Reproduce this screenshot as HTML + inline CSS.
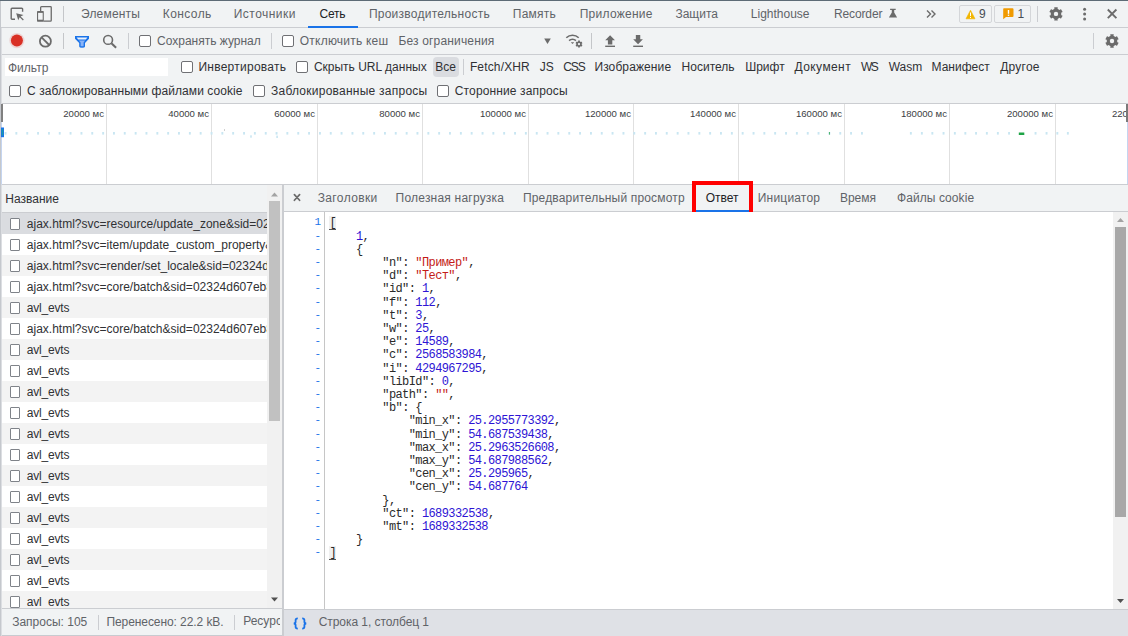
<!DOCTYPE html>
<html><head><meta charset="utf-8">
<style>
*{box-sizing:border-box;margin:0;padding:0}
html,body{width:1128px;height:636px;overflow:hidden;background:#fff;font-family:"Liberation Sans",sans-serif;font-size:12px;color:#202124}
.t{position:absolute;white-space:nowrap}
.r{position:absolute}
.cb{position:absolute;width:12px;height:12px;border:1.5px solid #6f7074;border-radius:2px;background:#fff}
.lcb{position:absolute;width:10px;height:12px;border:1px solid #7f8389;border-radius:1px;background:#fff}
svg{position:absolute;overflow:visible}
</style></head><body>
<div class="r" style="left:0px;top:0px;width:1128px;height:27px;background:#f1f3f4;"></div>
<div class="r" style="left:0px;top:27px;width:1128px;height:1px;background:#cbcdd1;"></div>
<div class="r" style="left:0px;top:28px;width:1128px;height:26px;background:#f1f3f4;"></div>
<div class="r" style="left:0px;top:54px;width:1128px;height:1px;background:#cbcdd1;"></div>
<svg style="left:0;top:0" width="1128" height="28">
<path d="M15 19.3 H12 a0.8 0.8 0 0 1 -0.8 -0.8 V9.1 a0.8 0.8 0 0 1 0.8 -0.8 H21.8 a0.8 0.8 0 0 1 0.8 0.8 V11.8" fill="none" stroke="#6b6b6b" stroke-width="1.4"/>
<path d="M16.2 13.2 L23.5 14.9 L20.6 16.4 L23.8 19.6 L22.9 20.5 L19.7 17.3 L18.2 20.2 Z" fill="#6b6b6b"/>
<path d="M40.65 11 V7.5 a0.85 0.85 0 0 1 0.85 -0.85 H50.4 a0.85 0.85 0 0 1 0.85 0.85 V20.3 a0.85 0.85 0 0 1 -0.85 0.85 H43.5" fill="none" stroke="#6b6b6b" stroke-width="1.3"/>
<rect x="37" y="11" width="6.8" height="10.8" rx="0.7" fill="#6b6b6b"/>
<rect x="38.1" y="12.9" width="4.6" height="6.8" fill="#f1f3f4"/>
</svg>
<div class="r" style="left:63px;top:6px;width:1px;height:16px;background:#c4c6c9;"></div>
<div class="t" style="left:81.0px;top:7.84px;font-size:12px;line-height:12px;color:#5f6368;font-family:'Liberation Sans',sans-serif;letter-spacing:0.186px;">Элементы</div>
<div class="t" style="left:162.8px;top:7.84px;font-size:12px;line-height:12px;color:#5f6368;font-family:'Liberation Sans',sans-serif;letter-spacing:0.400px;">Консоль</div>
<div class="t" style="left:233.8px;top:7.84px;font-size:12px;line-height:12px;color:#5f6368;font-family:'Liberation Sans',sans-serif;letter-spacing:0.450px;">Источники</div>
<div class="t" style="left:319.5px;top:7.84px;font-size:12px;line-height:12px;color:#202124;font-family:'Liberation Sans',sans-serif;letter-spacing:-0.267px;">Сеть</div>
<div class="t" style="left:368.9px;top:7.84px;font-size:12px;line-height:12px;color:#5f6368;font-family:'Liberation Sans',sans-serif;letter-spacing:0.253px;">Производительность</div>
<div class="t" style="left:512.8px;top:7.84px;font-size:12px;line-height:12px;color:#5f6368;font-family:'Liberation Sans',sans-serif;letter-spacing:0.220px;">Память</div>
<div class="t" style="left:579.7px;top:7.84px;font-size:12px;line-height:12px;color:#5f6368;font-family:'Liberation Sans',sans-serif;letter-spacing:0.267px;">Приложение</div>
<div class="t" style="left:675.4px;top:7.84px;font-size:12px;line-height:12px;color:#5f6368;font-family:'Liberation Sans',sans-serif;">Защита</div>
<div class="t" style="left:750.8px;top:7.84px;font-size:12px;line-height:12px;color:#5f6368;font-family:'Liberation Sans',sans-serif;">Lighthouse</div>
<div class="t" style="left:834.0px;top:7.84px;font-size:12px;line-height:12px;color:#5f6368;font-family:'Liberation Sans',sans-serif;letter-spacing:-0.129px;">Recorder</div>
<div class="r" style="left:308px;top:26px;width:50px;height:2px;background:#1a73e8;"></div>
<svg style="left:0;top:0" width="1128" height="28">
<path d="M890.1 8.8 H895.7 V10 H894.2 V12.4 L897.1 17.6 H888.9 L891.8 12.4 V10 H890.1 Z" fill="#6b6b6b"/>
<path d="M927 10.5 L930.5 14 L927 17.5 M931.5 10.5 L935 14 L931.5 17.5" fill="none" stroke="#6b6b6b" stroke-width="1.4"/>
</svg>
<div class="r" style="left:959px;top:5px;width:33px;height:18px;border:1px solid #d4d6d9;border-radius:2px"></div>
<div class="r" style="left:994px;top:5px;width:37px;height:18px;border:1px solid #d4d6d9;border-radius:2px"></div>
<svg style="left:0;top:0" width="1128" height="28">
<path d="M970.5 10.2 L975 18.8 H966 Z" fill="#f2b600" stroke="#f2b600" stroke-width="0.6" stroke-linejoin="round"/>
<rect x="970" y="12.5" width="1" height="3.6" fill="#fff"/><rect x="970" y="17" width="1" height="1" fill="#fff"/>
<path d="M1003.7 8.3 H1012.5 a1 1 0 0 1 1 1 V16 a1 1 0 0 1 -1 1 H1006 L1003.2 19.3 V9.3 a1 1 0 0 1 0.5 -1 Z" fill="#f09a00"/>
<rect x="1007.8" y="10" width="1.4" height="3.8" fill="#fff"/><rect x="1007.8" y="14.6" width="1.4" height="1.3" fill="#fff"/>
</svg>
<div class="t" style="left:979px;top:8.04px;font-size:12px;line-height:12px;color:#474d52;font-family:'Liberation Sans',sans-serif;">9</div>
<div class="t" style="left:1017.5px;top:8.04px;font-size:12px;line-height:12px;color:#474d52;font-family:'Liberation Sans',sans-serif;">1</div>
<div class="r" style="left:1037px;top:6px;width:1px;height:16px;background:#cbcdd1;"></div>
<svg style="left:0;top:0" width="1128" height="56">
<path d="M1054.50 8.59 L1054.21 7.24 L1057.79 7.24 L1057.50 8.59 L1058.57 9.45 L1059.85 9.95 L1060.88 9.02 L1062.66 12.11 L1061.35 12.54 L1061.13 13.90 L1061.35 15.26 L1062.66 15.69 L1060.88 18.78 L1059.85 17.85 L1058.57 18.35 L1057.50 19.21 L1057.79 20.56 L1054.21 20.56 L1054.50 19.21 L1053.43 18.35 L1052.15 17.85 L1051.12 18.78 L1049.34 15.69 L1050.65 15.26 L1050.87 13.90 L1050.65 12.54 L1049.34 12.11 L1051.12 9.02 L1052.15 9.95 L1053.43 9.45 Z" fill="#6b6b6b"/><circle cx="1056" cy="13.9" r="2.21" fill="#f1f3f4"/>
<circle cx="1084.6" cy="9.3" r="1.5" fill="#6b6b6b"/><circle cx="1084.6" cy="14.1" r="1.5" fill="#6b6b6b"/><circle cx="1084.6" cy="19" r="1.5" fill="#6b6b6b"/>
<path d="M1107.8 9.5 L1116.4 18.1 M1116.4 9.5 L1107.8 18.1" stroke="#6b6b6b" stroke-width="1.9"/>
<path d="M1110.50 35.69 L1110.21 34.34 L1113.79 34.34 L1113.50 35.69 L1114.57 36.55 L1115.85 37.05 L1116.88 36.12 L1118.66 39.21 L1117.35 39.64 L1117.13 41.00 L1117.35 42.36 L1118.66 42.79 L1116.88 45.88 L1115.85 44.95 L1114.57 45.45 L1113.50 46.31 L1113.79 47.66 L1110.21 47.66 L1110.50 46.31 L1109.43 45.45 L1108.15 44.95 L1107.12 45.88 L1105.34 42.79 L1106.65 42.36 L1106.87 41.00 L1106.65 39.64 L1105.34 39.21 L1107.12 36.12 L1108.15 37.05 L1109.43 36.55 Z" fill="#6b6b6b"/><circle cx="1112" cy="41" r="2.21" fill="#f1f3f4"/>
</svg>
<svg style="left:0;top:0" width="1128" height="56">
<circle cx="16.9" cy="40.6" r="7.6" fill="#d93025" opacity="0.15"/>
<circle cx="16.9" cy="40.6" r="6" fill="#d93025"/>
<circle cx="45.4" cy="41.2" r="5.5" fill="none" stroke="#6b6b6b" stroke-width="1.8"/>
<path d="M41.6 37.4 L49.2 45" stroke="#6b6b6b" stroke-width="1.8"/>
<path d="M75 36 H89 V38.8 L85 43 V46.5 Q85 47.8 82.1 47.8 Q79.2 47.8 79.2 46.5 V43 L75 38.8 Z" fill="#1a73e8"/>
<path d="M76.6 37.5 H87.4 L85.8 39.6 H78.2 Z" fill="#e9f1fd"/>
<path d="M78.8 40.6 H85.2 L83.6 42.4 V46.2 H80.6 V42.4 Z" fill="#8ab4f8"/>
<circle cx="108.1" cy="39.9" r="4.4" fill="none" stroke="#6b6b6b" stroke-width="1.6"/>
<path d="M111.4 43.3 L116.1 47.7" stroke="#6b6b6b" stroke-width="2.1"/>
<path d="M544.2 38.5 H550.8 L547.5 44 Z" fill="#6b6b6b"/>
<path d="M566.3 37.8 A8.8 8.8 0 0 1 578.7 37.8" fill="none" stroke="#6b6b6b" stroke-width="1.6"/>
<path d="M569.1 40.6 A4.8 4.8 0 0 1 575.9 40.6" fill="none" stroke="#6b6b6b" stroke-width="1.6"/>
<path d="M570.8 42.3 L574.2 42.3 L572.5 44 Z" fill="#6b6b6b"/>
<path d="M578.22 41.33 L578.07 40.62 L579.93 40.62 L579.78 41.33 L580.34 41.78 L581.01 42.04 L581.55 41.55 L582.48 43.17 L581.79 43.39 L581.68 44.10 L581.79 44.81 L582.48 45.03 L581.55 46.65 L581.01 46.16 L580.34 46.42 L579.78 46.87 L579.93 47.58 L578.07 47.58 L578.22 46.87 L577.66 46.42 L576.99 46.16 L576.45 46.65 L575.52 45.03 L576.21 44.81 L576.32 44.10 L576.21 43.39 L575.52 43.17 L576.45 41.55 L576.99 42.04 L577.66 41.78 Z" fill="#6b6b6b"/><circle cx="579" cy="44.1" r="1.15" fill="#f1f3f4"/>
<path d="M610.1 35.3 L615 40.3 H612.3 V44.5 H607.9 V40.3 H605.2 Z" fill="#6b6b6b"/>
<rect x="605.2" y="45.6" width="9.8" height="1.4" fill="#6b6b6b"/>
<path d="M638.05 44.2 L642.9 39.3 H640.25 V35.1 H635.85 V39.3 H633.2 Z" fill="#6b6b6b"/>
<rect x="633.2" y="45.6" width="9.8" height="1.4" fill="#6b6b6b"/>
</svg>
<div class="r" style="left:63px;top:33px;width:1px;height:16px;background:#c4c6c9;"></div>
<div class="r" style="left:128px;top:33px;width:1px;height:16px;background:#cbcdd1;"></div>
<div class="cb" style="left:139px;top:35px"></div>
<div class="t" style="left:157.0px;top:34.84px;font-size:12px;line-height:12px;color:#5f6368;font-family:'Liberation Sans',sans-serif;">Сохранять журнал</div>
<div class="r" style="left:271px;top:33px;width:1px;height:16px;background:#cbcdd1;"></div>
<div class="cb" style="left:282px;top:35px"></div>
<div class="t" style="left:299.8px;top:34.84px;font-size:12px;line-height:12px;color:#5f6368;font-family:'Liberation Sans',sans-serif;letter-spacing:0.217px;">Отключить кеш</div>
<div class="t" style="left:398.4px;top:34.84px;font-size:12px;line-height:12px;color:#5f6368;font-family:'Liberation Sans',sans-serif;letter-spacing:0.164px;">Без ограничения</div>
<div class="r" style="left:591px;top:33px;width:1px;height:16px;background:#c4c6c9;"></div>
<div class="r" style="left:1093px;top:33px;width:1px;height:16px;background:#cbcdd1;"></div>
<div class="r" style="left:0px;top:55px;width:1128px;height:48px;background:#f1f3f4;"></div>
<div class="r" style="left:0px;top:103px;width:1128px;height:1px;background:#cbcdd1;"></div>
<div class="r" style="left:5px;top:58px;width:163px;height:18px;background:#fff;"></div>
<div class="t" style="left:8px;top:61.84px;font-size:12px;line-height:12px;color:#5f6368;font-family:'Liberation Sans',sans-serif;">Фильтр</div>
<div class="cb" style="left:181px;top:61px"></div>
<div class="t" style="left:198.4px;top:61.04px;font-size:12px;line-height:12px;color:#303134;font-family:'Liberation Sans',sans-serif;letter-spacing:0.258px;">Инвертировать</div>
<div class="cb" style="left:296px;top:61px"></div>
<div class="t" style="left:313.9px;top:61.04px;font-size:12px;line-height:12px;color:#303134;font-family:'Liberation Sans',sans-serif;">Скрыть URL данных</div>
<div class="r" style="left:433px;top:57px;width:26px;height:20px;background:#dadce0;border-radius:4px"></div>
<div class="t" style="left:435.2px;top:61.04px;font-size:12px;line-height:12px;color:#303134;font-family:'Liberation Sans',sans-serif;">Все</div>
<div class="r" style="left:463px;top:59px;width:1px;height:16px;background:#cbcdd1;"></div>
<div class="t" style="left:469.9px;top:61.04px;font-size:12px;line-height:12px;color:#303134;font-family:'Liberation Sans',sans-serif;letter-spacing:0.150px;">Fetch/XHR</div>
<div class="t" style="left:539.7px;top:61.04px;font-size:12px;line-height:12px;color:#303134;font-family:'Liberation Sans',sans-serif;">JS</div>
<div class="t" style="left:563.3px;top:61.04px;font-size:12px;line-height:12px;color:#303134;font-family:'Liberation Sans',sans-serif;letter-spacing:-1.100px;">CSS</div>
<div class="t" style="left:594.4px;top:61.04px;font-size:12px;line-height:12px;color:#303134;font-family:'Liberation Sans',sans-serif;letter-spacing:0.110px;">Изображение</div>
<div class="t" style="left:681.6px;top:61.04px;font-size:12px;line-height:12px;color:#303134;font-family:'Liberation Sans',sans-serif;">Носитель</div>
<div class="t" style="left:745.2px;top:61.04px;font-size:12px;line-height:12px;color:#303134;font-family:'Liberation Sans',sans-serif;">Шрифт</div>
<div class="t" style="left:794.6px;top:61.04px;font-size:12px;line-height:12px;color:#303134;font-family:'Liberation Sans',sans-serif;letter-spacing:0.400px;">Документ</div>
<div class="t" style="left:861.0px;top:61.04px;font-size:12px;line-height:12px;color:#303134;font-family:'Liberation Sans',sans-serif;letter-spacing:-1.500px;">WS</div>
<div class="t" style="left:888.7px;top:61.04px;font-size:12px;line-height:12px;color:#303134;font-family:'Liberation Sans',sans-serif;">Wasm</div>
<div class="t" style="left:931.5px;top:61.04px;font-size:12px;line-height:12px;color:#303134;font-family:'Liberation Sans',sans-serif;">Манифест</div>
<div class="t" style="left:1000.2px;top:61.04px;font-size:12px;line-height:12px;color:#303134;font-family:'Liberation Sans',sans-serif;letter-spacing:0.240px;">Другое</div>
<div class="cb" style="left:9px;top:85px"></div>
<div class="t" style="left:27.0px;top:84.84px;font-size:12px;line-height:12px;color:#303134;font-family:'Liberation Sans',sans-serif;letter-spacing:0.091px;">С заблокированными файлами cookie</div>
<div class="cb" style="left:253px;top:85px"></div>
<div class="t" style="left:271.0px;top:84.84px;font-size:12px;line-height:12px;color:#303134;font-family:'Liberation Sans',sans-serif;letter-spacing:0.245px;">Заблокированные запросы</div>
<div class="cb" style="left:437px;top:85px"></div>
<div class="t" style="left:454.8px;top:84.84px;font-size:12px;line-height:12px;color:#303134;font-family:'Liberation Sans',sans-serif;letter-spacing:0.131px;">Сторонние запросы</div>
<div class="r" style="left:0px;top:104px;width:1128px;height:80px;background:#fff;"></div>
<div class="r" style="left:0px;top:184px;width:1128px;height:1px;background:#cbcdd1;"></div>
<div class="r" style="left:106px;top:104px;width:1px;height:80px;background:#e0e0e0;"></div>
<div class="t" style="right:1024px;top:109.17px;font-size:9.6px;line-height:9.6px;color:#3c4043;font-family:'Liberation Sans',sans-serif;">20000 мс</div>
<div class="r" style="left:211px;top:104px;width:1px;height:80px;background:#e0e0e0;"></div>
<div class="t" style="right:919px;top:109.17px;font-size:9.6px;line-height:9.6px;color:#3c4043;font-family:'Liberation Sans',sans-serif;">40000 мс</div>
<div class="r" style="left:317px;top:104px;width:1px;height:80px;background:#e0e0e0;"></div>
<div class="t" style="right:813px;top:109.17px;font-size:9.6px;line-height:9.6px;color:#3c4043;font-family:'Liberation Sans',sans-serif;">60000 мс</div>
<div class="r" style="left:422px;top:104px;width:1px;height:80px;background:#e0e0e0;"></div>
<div class="t" style="right:708px;top:109.17px;font-size:9.6px;line-height:9.6px;color:#3c4043;font-family:'Liberation Sans',sans-serif;">80000 мс</div>
<div class="r" style="left:528px;top:104px;width:1px;height:80px;background:#e0e0e0;"></div>
<div class="t" style="right:602px;top:109.17px;font-size:9.6px;line-height:9.6px;color:#3c4043;font-family:'Liberation Sans',sans-serif;">100000 мс</div>
<div class="r" style="left:633px;top:104px;width:1px;height:80px;background:#e0e0e0;"></div>
<div class="t" style="right:497px;top:109.17px;font-size:9.6px;line-height:9.6px;color:#3c4043;font-family:'Liberation Sans',sans-serif;">120000 мс</div>
<div class="r" style="left:738px;top:104px;width:1px;height:80px;background:#e0e0e0;"></div>
<div class="t" style="right:392px;top:109.17px;font-size:9.6px;line-height:9.6px;color:#3c4043;font-family:'Liberation Sans',sans-serif;">140000 мс</div>
<div class="r" style="left:844px;top:104px;width:1px;height:80px;background:#e0e0e0;"></div>
<div class="t" style="right:286px;top:109.17px;font-size:9.6px;line-height:9.6px;color:#3c4043;font-family:'Liberation Sans',sans-serif;">160000 мс</div>
<div class="r" style="left:949px;top:104px;width:1px;height:80px;background:#e0e0e0;"></div>
<div class="t" style="right:181px;top:109.17px;font-size:9.6px;line-height:9.6px;color:#3c4043;font-family:'Liberation Sans',sans-serif;">180000 мс</div>
<div class="r" style="left:1055px;top:104px;width:1px;height:80px;background:#e0e0e0;"></div>
<div class="t" style="right:75px;top:109.17px;font-size:9.6px;line-height:9.6px;color:#3c4043;font-family:'Liberation Sans',sans-serif;">200000 мс</div>
<div class="t" style="right:-30px;top:109.17px;font-size:9.6px;line-height:9.6px;color:#3c4043;font-family:'Liberation Sans',sans-serif;">220000 мс</div>
<svg style="left:0;top:0;z-index:60" width="1128" height="185"><rect x="4.6" y="132" width="1.9" height="2.6" fill="#c9e6f2"/><rect x="15.4" y="132" width="1.9" height="2.6" fill="#c9e6f2"/><rect x="26.3" y="132" width="1.9" height="2.6" fill="#c9e6f2"/><rect x="37.1" y="132" width="1.9" height="2.6" fill="#c9e6f2"/><rect x="48.0" y="132" width="1.9" height="2.6" fill="#c9e6f2"/><rect x="58.8" y="132" width="1.9" height="2.6" fill="#c9e6f2"/><rect x="69.6" y="132" width="1.9" height="2.6" fill="#c9e6f2"/><rect x="80.5" y="132" width="1.9" height="2.6" fill="#c9e6f2"/><rect x="91.3" y="132" width="1.9" height="2.6" fill="#c9e6f2"/><rect x="102.2" y="132" width="1.9" height="2.6" fill="#c9e6f2"/><rect x="113.0" y="132" width="1.9" height="2.6" fill="#c9e6f2"/><rect x="123.8" y="132" width="1.9" height="2.6" fill="#c9e6f2"/><rect x="134.7" y="132" width="1.9" height="2.6" fill="#c9e6f2"/><rect x="145.5" y="132" width="1.9" height="2.6" fill="#c9e6f2"/><rect x="156.4" y="132" width="1.9" height="2.6" fill="#c9e6f2"/><rect x="167.2" y="132" width="1.9" height="2.6" fill="#c9e6f2"/><rect x="178.0" y="132" width="1.9" height="2.6" fill="#c9e6f2"/><rect x="188.9" y="132" width="1.9" height="2.6" fill="#c9e6f2"/><rect x="199.7" y="132" width="1.9" height="2.6" fill="#c9e6f2"/><rect x="210.6" y="132" width="1.9" height="2.6" fill="#c9e6f2"/><rect x="221.4" y="132" width="1.9" height="2.6" fill="#c9e6f2"/><rect x="232.2" y="132" width="1.9" height="2.6" fill="#c9e6f2"/><rect x="243.1" y="132" width="1.9" height="2.6" fill="#c9e6f2"/><rect x="253.9" y="132" width="1.9" height="2.6" fill="#c9e6f2"/><rect x="264.8" y="132" width="1.9" height="2.6" fill="#c9e6f2"/><rect x="275.6" y="132" width="1.9" height="2.6" fill="#c9e6f2"/><rect x="286.4" y="132" width="1.9" height="2.6" fill="#c9e6f2"/><rect x="297.3" y="132" width="1.9" height="2.6" fill="#c9e6f2"/><rect x="308.1" y="132" width="1.9" height="2.6" fill="#c9e6f2"/><rect x="319.0" y="132" width="1.9" height="2.6" fill="#c9e6f2"/><rect x="329.8" y="132" width="1.9" height="2.6" fill="#c9e6f2"/><rect x="340.6" y="132" width="1.9" height="2.6" fill="#c9e6f2"/><rect x="351.5" y="132" width="1.9" height="2.6" fill="#c9e6f2"/><rect x="362.3" y="132" width="1.9" height="2.6" fill="#c9e6f2"/><rect x="373.2" y="132" width="1.9" height="2.6" fill="#c9e6f2"/><rect x="384.0" y="132" width="1.9" height="2.6" fill="#c9e6f2"/><rect x="394.8" y="132" width="1.9" height="2.6" fill="#c9e6f2"/><rect x="405.7" y="132" width="1.9" height="2.6" fill="#c9e6f2"/><rect x="416.5" y="132" width="1.9" height="2.6" fill="#c9e6f2"/><rect x="427.4" y="132" width="1.9" height="2.6" fill="#c9e6f2"/><rect x="438.2" y="132" width="1.9" height="2.6" fill="#c9e6f2"/><rect x="449.0" y="132" width="1.9" height="2.6" fill="#c9e6f2"/><rect x="459.9" y="132" width="1.9" height="2.6" fill="#c9e6f2"/><rect x="470.7" y="132" width="1.9" height="2.6" fill="#c9e6f2"/><rect x="481.6" y="132" width="1.9" height="2.6" fill="#c9e6f2"/><rect x="492.4" y="132" width="1.9" height="2.6" fill="#c9e6f2"/><rect x="503.2" y="132" width="1.9" height="2.6" fill="#c9e6f2"/><rect x="514.1" y="132" width="1.9" height="2.6" fill="#c9e6f2"/><rect x="524.9" y="132" width="1.9" height="2.6" fill="#c9e6f2"/><rect x="535.8" y="132" width="1.9" height="2.6" fill="#c9e6f2"/><rect x="546.6" y="132" width="1.9" height="2.6" fill="#c9e6f2"/><rect x="557.4" y="132" width="1.9" height="2.6" fill="#c9e6f2"/><rect x="568.3" y="132" width="1.9" height="2.6" fill="#c9e6f2"/><rect x="579.1" y="132" width="1.9" height="2.6" fill="#c9e6f2"/><rect x="590.0" y="132" width="1.9" height="2.6" fill="#c9e6f2"/><rect x="600.8" y="132" width="1.9" height="2.6" fill="#c9e6f2"/><rect x="611.6" y="132" width="1.9" height="2.6" fill="#c9e6f2"/><rect x="622.5" y="132" width="1.9" height="2.6" fill="#c9e6f2"/><rect x="633.3" y="132" width="1.9" height="2.6" fill="#c9e6f2"/><rect x="644.2" y="132" width="1.9" height="2.6" fill="#c9e6f2"/><rect x="655.0" y="132" width="1.9" height="2.6" fill="#c9e6f2"/><rect x="665.8" y="132" width="1.9" height="2.6" fill="#c9e6f2"/><rect x="676.7" y="132" width="1.9" height="2.6" fill="#c9e6f2"/><rect x="687.5" y="132" width="1.9" height="2.6" fill="#c9e6f2"/><rect x="698.4" y="132" width="1.9" height="2.6" fill="#c9e6f2"/><rect x="709.2" y="132" width="1.9" height="2.6" fill="#c9e6f2"/><rect x="720.0" y="132" width="1.9" height="2.6" fill="#c9e6f2"/><rect x="730.9" y="132" width="1.9" height="2.6" fill="#c9e6f2"/><rect x="741.7" y="132" width="1.9" height="2.6" fill="#c9e6f2"/><rect x="752.6" y="132" width="1.9" height="2.6" fill="#c9e6f2"/><rect x="763.4" y="132" width="1.9" height="2.6" fill="#c9e6f2"/><rect x="774.2" y="132" width="1.9" height="2.6" fill="#c9e6f2"/><rect x="785.1" y="132" width="1.9" height="2.6" fill="#c9e6f2"/><rect x="795.9" y="132" width="1.9" height="2.6" fill="#c9e6f2"/><rect x="806.8" y="132" width="1.9" height="2.6" fill="#c9e6f2"/><rect x="817.6" y="132" width="1.9" height="2.6" fill="#c9e6f2"/><rect x="828.4" y="132" width="1.9" height="2.6" fill="#c9e6f2"/><rect x="839.3" y="132" width="1.9" height="2.6" fill="#c9e6f2"/><rect x="850.1" y="132" width="1.9" height="2.6" fill="#c9e6f2"/><rect x="861.0" y="132" width="1.9" height="2.6" fill="#c9e6f2"/><rect x="909.9" y="132" width="1.9" height="2.6" fill="#c9e6f2"/><rect x="920.9" y="132" width="1.9" height="2.6" fill="#c9e6f2"/><rect x="931.4" y="132" width="1.9" height="2.6" fill="#c9e6f2"/><rect x="942.6" y="132" width="1.9" height="2.6" fill="#c9e6f2"/><rect x="953.9" y="132" width="1.9" height="2.6" fill="#c9e6f2"/><rect x="964.4" y="132" width="1.9" height="2.6" fill="#c9e6f2"/><rect x="975.1" y="132" width="1.9" height="2.6" fill="#c9e6f2"/><rect x="985.9" y="132" width="1.9" height="2.6" fill="#c9e6f2"/><rect x="996.9" y="132" width="1.9" height="2.6" fill="#c9e6f2"/><rect x="1008.1" y="132" width="1.9" height="2.6" fill="#c9e6f2"/><rect x="1034.6" y="132" width="1.9" height="2.6" fill="#c9e6f2"/><rect x="1045.6" y="132" width="1.9" height="2.6" fill="#c9e6f2"/><rect x="1056.4" y="132" width="1.9" height="2.6" fill="#c9e6f2"/><rect x="1066.9" y="132" width="1.9" height="2.6" fill="#c9e6f2"/><rect x="224" y="129" width="1" height="2" fill="#d0d0d0"/><rect x="829" y="132" width="1" height="2.6" fill="#4fb56f"/><rect x="250.2" y="135.3" width="1.6" height="2.4" fill="#c9e6f2"/><rect x="276.3" y="135.6" width="1.6" height="2.4" fill="#c9e6f2"/><rect x="1" y="122.5" width="1" height="62" fill="#c5d5f0"/><rect x="1" y="127.5" width="3" height="9.7" fill="#1a73e8"/><rect x="1.8" y="129" width="1.4" height="6.5" fill="#1a9aa8"/><rect x="1018.8" y="132.5" width="5.5" height="2.5" fill="#1ea446"/><rect x="1" y="104" width="2" height="18" fill="#808080"/><rect x="1126" y="104" width="2" height="18" fill="#7a7a7a"/><rect x="1127" y="122" width="1" height="62" fill="#c5d5f0"/></svg>
<div class="r" style="left:0px;top:185px;width:282px;height:27px;background:#f1f3f4;"></div>
<div class="r" style="left:0px;top:212px;width:267px;height:1px;background:#cbcdd1;"></div>
<div class="t" style="left:5.3px;top:192.84px;font-size:12px;line-height:12px;color:#303134;font-family:'Liberation Sans',sans-serif;">Название</div>
<div class="r" style="left:0;top:213px;width:267px;height:396px;overflow:hidden">
<div class="r" style="left:0;top:0px;width:267px;height:21px;background:#dadce0"></div>
<div class="lcb" style="left:10px;top:5px"></div>
<div class="t" style="left:26.8px;top:5.24px;font-size:12px;line-height:12px;color:#303134;">ajax.html?svc=resource/update_zone&amp;sid=02324d607eb</div>
<div class="r" style="left:0;top:21px;width:267px;height:21px;background:#fff"></div>
<div class="lcb" style="left:10px;top:26px"></div>
<div class="t" style="left:26.8px;top:26.24px;font-size:12px;line-height:12px;color:#303134;">ajax.html?svc=item/update_custom_property&amp;sid=0</div>
<div class="r" style="left:0;top:42px;width:267px;height:21px;background:#f3f3f3"></div>
<div class="lcb" style="left:10px;top:47px"></div>
<div class="t" style="left:26.8px;top:47.24px;font-size:12px;line-height:12px;color:#303134;">ajax.html?svc=render/set_locale&amp;sid=02324d607eb</div>
<div class="r" style="left:0;top:63px;width:267px;height:21px;background:#fff"></div>
<div class="lcb" style="left:10px;top:68px"></div>
<div class="t" style="left:26.8px;top:68.24px;font-size:12px;line-height:12px;color:#303134;">ajax.html?svc=core/batch&amp;sid=02324d607eb8a</div>
<div class="r" style="left:0;top:84px;width:267px;height:21px;background:#f3f3f3"></div>
<div class="lcb" style="left:10px;top:89px"></div>
<div class="t" style="left:26.8px;top:89.24px;font-size:12px;line-height:12px;color:#303134;letter-spacing:-0.2px">avl_evts</div>
<div class="r" style="left:0;top:105px;width:267px;height:21px;background:#fff"></div>
<div class="lcb" style="left:10px;top:110px"></div>
<div class="t" style="left:26.8px;top:110.24px;font-size:12px;line-height:12px;color:#303134;">ajax.html?svc=core/batch&amp;sid=02324d607eb8a</div>
<div class="r" style="left:0;top:126px;width:267px;height:21px;background:#f3f3f3"></div>
<div class="lcb" style="left:10px;top:131px"></div>
<div class="t" style="left:26.8px;top:131.24px;font-size:12px;line-height:12px;color:#303134;letter-spacing:-0.2px">avl_evts</div>
<div class="r" style="left:0;top:147px;width:267px;height:21px;background:#fff"></div>
<div class="lcb" style="left:10px;top:152px"></div>
<div class="t" style="left:26.8px;top:152.24px;font-size:12px;line-height:12px;color:#303134;letter-spacing:-0.2px">avl_evts</div>
<div class="r" style="left:0;top:168px;width:267px;height:21px;background:#f3f3f3"></div>
<div class="lcb" style="left:10px;top:173px"></div>
<div class="t" style="left:26.8px;top:173.24px;font-size:12px;line-height:12px;color:#303134;letter-spacing:-0.2px">avl_evts</div>
<div class="r" style="left:0;top:189px;width:267px;height:21px;background:#fff"></div>
<div class="lcb" style="left:10px;top:194px"></div>
<div class="t" style="left:26.8px;top:194.24px;font-size:12px;line-height:12px;color:#303134;letter-spacing:-0.2px">avl_evts</div>
<div class="r" style="left:0;top:210px;width:267px;height:21px;background:#f3f3f3"></div>
<div class="lcb" style="left:10px;top:215px"></div>
<div class="t" style="left:26.8px;top:215.24px;font-size:12px;line-height:12px;color:#303134;letter-spacing:-0.2px">avl_evts</div>
<div class="r" style="left:0;top:231px;width:267px;height:21px;background:#fff"></div>
<div class="lcb" style="left:10px;top:236px"></div>
<div class="t" style="left:26.8px;top:236.24px;font-size:12px;line-height:12px;color:#303134;letter-spacing:-0.2px">avl_evts</div>
<div class="r" style="left:0;top:252px;width:267px;height:21px;background:#f3f3f3"></div>
<div class="lcb" style="left:10px;top:257px"></div>
<div class="t" style="left:26.8px;top:257.24px;font-size:12px;line-height:12px;color:#303134;letter-spacing:-0.2px">avl_evts</div>
<div class="r" style="left:0;top:273px;width:267px;height:21px;background:#fff"></div>
<div class="lcb" style="left:10px;top:278px"></div>
<div class="t" style="left:26.8px;top:278.24px;font-size:12px;line-height:12px;color:#303134;letter-spacing:-0.2px">avl_evts</div>
<div class="r" style="left:0;top:294px;width:267px;height:21px;background:#f3f3f3"></div>
<div class="lcb" style="left:10px;top:299px"></div>
<div class="t" style="left:26.8px;top:299.24px;font-size:12px;line-height:12px;color:#303134;letter-spacing:-0.2px">avl_evts</div>
<div class="r" style="left:0;top:315px;width:267px;height:21px;background:#fff"></div>
<div class="lcb" style="left:10px;top:320px"></div>
<div class="t" style="left:26.8px;top:320.24px;font-size:12px;line-height:12px;color:#303134;letter-spacing:-0.2px">avl_evts</div>
<div class="r" style="left:0;top:336px;width:267px;height:21px;background:#f3f3f3"></div>
<div class="lcb" style="left:10px;top:341px"></div>
<div class="t" style="left:26.8px;top:341.24px;font-size:12px;line-height:12px;color:#303134;letter-spacing:-0.2px">avl_evts</div>
<div class="r" style="left:0;top:357px;width:267px;height:21px;background:#fff"></div>
<div class="lcb" style="left:10px;top:362px"></div>
<div class="t" style="left:26.8px;top:362.24px;font-size:12px;line-height:12px;color:#303134;letter-spacing:-0.2px">avl_evts</div>
<div class="r" style="left:0;top:378px;width:267px;height:21px;background:#f3f3f3"></div>
<div class="lcb" style="left:10px;top:383px"></div>
<div class="t" style="left:26.8px;top:383.24px;font-size:12px;line-height:12px;color:#303134;letter-spacing:-0.2px">avl_evts</div>
</div>
<div class="r" style="left:267px;top:185px;width:15px;height:424px;background:#f1f1f1;"></div>
<div class="r" style="left:269px;top:201px;width:11px;height:220px;background:#c1c1c1;"></div>
<svg style="left:0;top:0" width="1128" height="636"><path d="M271 196.5 H278 L274.5 192.5 Z" fill="#a3a3a3"/><path d="M271 597.5 H278 L274.5 601.5 Z" fill="#505050"/></svg>
<div class="r" style="left:282px;top:185px;width:2px;height:451px;background:#cbcdd1;"></div>
<div class="r" style="left:284px;top:185px;width:844px;height:26px;background:#f1f3f4;"></div>
<div class="r" style="left:284px;top:211px;width:844px;height:1px;background:#cbcdd1;"></div>
<svg style="left:0;top:0" width="1128" height="636"><path d="M294.4 194.6 L299.6 200.3 M299.6 194.6 L294.4 200.3" stroke="#6b6b6b" stroke-width="1.7" stroke-linecap="round"/></svg>
<div class="t" style="left:317.7px;top:191.84px;font-size:12px;line-height:12px;color:#5f6368;font-family:'Liberation Sans',sans-serif;letter-spacing:0.375px;">Заголовки</div>
<div class="t" style="left:395.6px;top:191.84px;font-size:12px;line-height:12px;color:#5f6368;font-family:'Liberation Sans',sans-serif;letter-spacing:0.212px;">Полезная нагрузка</div>
<div class="t" style="left:523.0px;top:191.84px;font-size:12px;line-height:12px;color:#5f6368;font-family:'Liberation Sans',sans-serif;letter-spacing:0.161px;">Предварительный просмотр</div>
<div class="t" style="left:705.7px;top:191.84px;font-size:12px;line-height:12px;color:#202124;font-family:'Liberation Sans',sans-serif;">Ответ</div>
<div class="t" style="left:757.8px;top:191.84px;font-size:12px;line-height:12px;color:#5f6368;font-family:'Liberation Sans',sans-serif;letter-spacing:0.188px;">Инициатор</div>
<div class="t" style="left:839.9px;top:191.84px;font-size:12px;line-height:12px;color:#5f6368;font-family:'Liberation Sans',sans-serif;">Время</div>
<div class="t" style="left:897.0px;top:191.84px;font-size:12px;line-height:12px;color:#5f6368;font-family:'Liberation Sans',sans-serif;letter-spacing:0.082px;">Файлы cookie</div>
<div class="r" style="left:696px;top:210px;width:53px;height:2px;background:#1a73e8;"></div>
<div class="r" style="left:692px;top:181px;width:61px;height:35px;border:4px solid #ff0000"></div>
<div class="r" style="left:284px;top:212px;width:829px;height:397px;background:#fff;"></div>
<div class="r" style="left:324px;top:212px;width:1px;height:397px;background:#c6c6c6;"></div>
<div class="t" style="left:329.5px;top:217.30px;font-family:'Liberation Mono',monospace;font-size:12px;letter-spacing:-0.6px;line-height:12px;white-space:pre"><span style="color:#2a2a2a">[</span></div>
<div class="t" style="right:807px;top:217.30px;font-family:'Liberation Mono',monospace;font-size:11px;line-height:11px;color:#1a73e8">1</div>
<div class="t" style="left:329.5px;top:230.50px;font-family:'Liberation Mono',monospace;font-size:12px;letter-spacing:-0.6px;line-height:12px;white-space:pre"><span style="color:#2a2a2a">    </span><span style="color:#2d14d4">1</span><span style="color:#2a2a2a">,</span></div>
<div class="t" style="right:807px;top:230.50px;font-family:'Liberation Mono',monospace;font-size:11px;line-height:11px;color:#1a73e8">-</div>
<div class="t" style="left:329.5px;top:243.70px;font-family:'Liberation Mono',monospace;font-size:12px;letter-spacing:-0.6px;line-height:12px;white-space:pre"><span style="color:#2a2a2a">    {</span></div>
<div class="t" style="right:807px;top:243.70px;font-family:'Liberation Mono',monospace;font-size:11px;line-height:11px;color:#1a73e8">-</div>
<div class="t" style="left:329.5px;top:256.90px;font-family:'Liberation Mono',monospace;font-size:12px;letter-spacing:-0.6px;line-height:12px;white-space:pre"><span style="color:#2a2a2a">        </span><span style="color:#2a2a2a">&quot;n&quot;</span><span style="color:#2a2a2a">: </span><span style="color:#c41a16">&quot;Пример&quot;</span><span style="color:#2a2a2a">,</span></div>
<div class="t" style="right:807px;top:256.90px;font-family:'Liberation Mono',monospace;font-size:11px;line-height:11px;color:#1a73e8">-</div>
<div class="t" style="left:329.5px;top:270.10px;font-family:'Liberation Mono',monospace;font-size:12px;letter-spacing:-0.6px;line-height:12px;white-space:pre"><span style="color:#2a2a2a">        </span><span style="color:#2a2a2a">&quot;d&quot;</span><span style="color:#2a2a2a">: </span><span style="color:#c41a16">&quot;Тест&quot;</span><span style="color:#2a2a2a">,</span></div>
<div class="t" style="right:807px;top:270.10px;font-family:'Liberation Mono',monospace;font-size:11px;line-height:11px;color:#1a73e8">-</div>
<div class="t" style="left:329.5px;top:283.30px;font-family:'Liberation Mono',monospace;font-size:12px;letter-spacing:-0.6px;line-height:12px;white-space:pre"><span style="color:#2a2a2a">        </span><span style="color:#2a2a2a">&quot;id&quot;</span><span style="color:#2a2a2a">: </span><span style="color:#2d14d4">1</span><span style="color:#2a2a2a">,</span></div>
<div class="t" style="right:807px;top:283.30px;font-family:'Liberation Mono',monospace;font-size:11px;line-height:11px;color:#1a73e8">-</div>
<div class="t" style="left:329.5px;top:296.50px;font-family:'Liberation Mono',monospace;font-size:12px;letter-spacing:-0.6px;line-height:12px;white-space:pre"><span style="color:#2a2a2a">        </span><span style="color:#2a2a2a">&quot;f&quot;</span><span style="color:#2a2a2a">: </span><span style="color:#2d14d4">112</span><span style="color:#2a2a2a">,</span></div>
<div class="t" style="right:807px;top:296.50px;font-family:'Liberation Mono',monospace;font-size:11px;line-height:11px;color:#1a73e8">-</div>
<div class="t" style="left:329.5px;top:309.70px;font-family:'Liberation Mono',monospace;font-size:12px;letter-spacing:-0.6px;line-height:12px;white-space:pre"><span style="color:#2a2a2a">        </span><span style="color:#2a2a2a">&quot;t&quot;</span><span style="color:#2a2a2a">: </span><span style="color:#2d14d4">3</span><span style="color:#2a2a2a">,</span></div>
<div class="t" style="right:807px;top:309.70px;font-family:'Liberation Mono',monospace;font-size:11px;line-height:11px;color:#1a73e8">-</div>
<div class="t" style="left:329.5px;top:322.90px;font-family:'Liberation Mono',monospace;font-size:12px;letter-spacing:-0.6px;line-height:12px;white-space:pre"><span style="color:#2a2a2a">        </span><span style="color:#2a2a2a">&quot;w&quot;</span><span style="color:#2a2a2a">: </span><span style="color:#2d14d4">25</span><span style="color:#2a2a2a">,</span></div>
<div class="t" style="right:807px;top:322.90px;font-family:'Liberation Mono',monospace;font-size:11px;line-height:11px;color:#1a73e8">-</div>
<div class="t" style="left:329.5px;top:336.10px;font-family:'Liberation Mono',monospace;font-size:12px;letter-spacing:-0.6px;line-height:12px;white-space:pre"><span style="color:#2a2a2a">        </span><span style="color:#2a2a2a">&quot;e&quot;</span><span style="color:#2a2a2a">: </span><span style="color:#2d14d4">14589</span><span style="color:#2a2a2a">,</span></div>
<div class="t" style="right:807px;top:336.10px;font-family:'Liberation Mono',monospace;font-size:11px;line-height:11px;color:#1a73e8">-</div>
<div class="t" style="left:329.5px;top:349.30px;font-family:'Liberation Mono',monospace;font-size:12px;letter-spacing:-0.6px;line-height:12px;white-space:pre"><span style="color:#2a2a2a">        </span><span style="color:#2a2a2a">&quot;c&quot;</span><span style="color:#2a2a2a">: </span><span style="color:#2d14d4">2568583984</span><span style="color:#2a2a2a">,</span></div>
<div class="t" style="right:807px;top:349.30px;font-family:'Liberation Mono',monospace;font-size:11px;line-height:11px;color:#1a73e8">-</div>
<div class="t" style="left:329.5px;top:362.50px;font-family:'Liberation Mono',monospace;font-size:12px;letter-spacing:-0.6px;line-height:12px;white-space:pre"><span style="color:#2a2a2a">        </span><span style="color:#2a2a2a">&quot;i&quot;</span><span style="color:#2a2a2a">: </span><span style="color:#2d14d4">4294967295</span><span style="color:#2a2a2a">,</span></div>
<div class="t" style="right:807px;top:362.50px;font-family:'Liberation Mono',monospace;font-size:11px;line-height:11px;color:#1a73e8">-</div>
<div class="t" style="left:329.5px;top:375.70px;font-family:'Liberation Mono',monospace;font-size:12px;letter-spacing:-0.6px;line-height:12px;white-space:pre"><span style="color:#2a2a2a">        </span><span style="color:#2a2a2a">&quot;libId&quot;</span><span style="color:#2a2a2a">: </span><span style="color:#2d14d4">0</span><span style="color:#2a2a2a">,</span></div>
<div class="t" style="right:807px;top:375.70px;font-family:'Liberation Mono',monospace;font-size:11px;line-height:11px;color:#1a73e8">-</div>
<div class="t" style="left:329.5px;top:388.90px;font-family:'Liberation Mono',monospace;font-size:12px;letter-spacing:-0.6px;line-height:12px;white-space:pre"><span style="color:#2a2a2a">        </span><span style="color:#2a2a2a">&quot;path&quot;</span><span style="color:#2a2a2a">: </span><span style="color:#c41a16">&quot;&quot;</span><span style="color:#2a2a2a">,</span></div>
<div class="t" style="right:807px;top:388.90px;font-family:'Liberation Mono',monospace;font-size:11px;line-height:11px;color:#1a73e8">-</div>
<div class="t" style="left:329.5px;top:402.10px;font-family:'Liberation Mono',monospace;font-size:12px;letter-spacing:-0.6px;line-height:12px;white-space:pre"><span style="color:#2a2a2a">        </span><span style="color:#2a2a2a">&quot;b&quot;</span><span style="color:#2a2a2a">: {</span></div>
<div class="t" style="right:807px;top:402.10px;font-family:'Liberation Mono',monospace;font-size:11px;line-height:11px;color:#1a73e8">-</div>
<div class="t" style="left:329.5px;top:415.30px;font-family:'Liberation Mono',monospace;font-size:12px;letter-spacing:-0.6px;line-height:12px;white-space:pre"><span style="color:#2a2a2a">            </span><span style="color:#2a2a2a">&quot;min_x&quot;</span><span style="color:#2a2a2a">: </span><span style="color:#2d14d4">25.2955773392</span><span style="color:#2a2a2a">,</span></div>
<div class="t" style="right:807px;top:415.30px;font-family:'Liberation Mono',monospace;font-size:11px;line-height:11px;color:#1a73e8">-</div>
<div class="t" style="left:329.5px;top:428.50px;font-family:'Liberation Mono',monospace;font-size:12px;letter-spacing:-0.6px;line-height:12px;white-space:pre"><span style="color:#2a2a2a">            </span><span style="color:#2a2a2a">&quot;min_y&quot;</span><span style="color:#2a2a2a">: </span><span style="color:#2d14d4">54.687539438</span><span style="color:#2a2a2a">,</span></div>
<div class="t" style="right:807px;top:428.50px;font-family:'Liberation Mono',monospace;font-size:11px;line-height:11px;color:#1a73e8">-</div>
<div class="t" style="left:329.5px;top:441.70px;font-family:'Liberation Mono',monospace;font-size:12px;letter-spacing:-0.6px;line-height:12px;white-space:pre"><span style="color:#2a2a2a">            </span><span style="color:#2a2a2a">&quot;max_x&quot;</span><span style="color:#2a2a2a">: </span><span style="color:#2d14d4">25.2963526608</span><span style="color:#2a2a2a">,</span></div>
<div class="t" style="right:807px;top:441.70px;font-family:'Liberation Mono',monospace;font-size:11px;line-height:11px;color:#1a73e8">-</div>
<div class="t" style="left:329.5px;top:454.90px;font-family:'Liberation Mono',monospace;font-size:12px;letter-spacing:-0.6px;line-height:12px;white-space:pre"><span style="color:#2a2a2a">            </span><span style="color:#2a2a2a">&quot;max_y&quot;</span><span style="color:#2a2a2a">: </span><span style="color:#2d14d4">54.687988562</span><span style="color:#2a2a2a">,</span></div>
<div class="t" style="right:807px;top:454.90px;font-family:'Liberation Mono',monospace;font-size:11px;line-height:11px;color:#1a73e8">-</div>
<div class="t" style="left:329.5px;top:468.10px;font-family:'Liberation Mono',monospace;font-size:12px;letter-spacing:-0.6px;line-height:12px;white-space:pre"><span style="color:#2a2a2a">            </span><span style="color:#2a2a2a">&quot;cen_x&quot;</span><span style="color:#2a2a2a">: </span><span style="color:#2d14d4">25.295965</span><span style="color:#2a2a2a">,</span></div>
<div class="t" style="right:807px;top:468.10px;font-family:'Liberation Mono',monospace;font-size:11px;line-height:11px;color:#1a73e8">-</div>
<div class="t" style="left:329.5px;top:481.30px;font-family:'Liberation Mono',monospace;font-size:12px;letter-spacing:-0.6px;line-height:12px;white-space:pre"><span style="color:#2a2a2a">            </span><span style="color:#2a2a2a">&quot;cen_y&quot;</span><span style="color:#2a2a2a">: </span><span style="color:#2d14d4">54.687764</span></div>
<div class="t" style="right:807px;top:481.30px;font-family:'Liberation Mono',monospace;font-size:11px;line-height:11px;color:#1a73e8">-</div>
<div class="t" style="left:329.5px;top:494.50px;font-family:'Liberation Mono',monospace;font-size:12px;letter-spacing:-0.6px;line-height:12px;white-space:pre"><span style="color:#2a2a2a">        },</span></div>
<div class="t" style="right:807px;top:494.50px;font-family:'Liberation Mono',monospace;font-size:11px;line-height:11px;color:#1a73e8">-</div>
<div class="t" style="left:329.5px;top:507.70px;font-family:'Liberation Mono',monospace;font-size:12px;letter-spacing:-0.6px;line-height:12px;white-space:pre"><span style="color:#2a2a2a">        </span><span style="color:#2a2a2a">&quot;ct&quot;</span><span style="color:#2a2a2a">: </span><span style="color:#2d14d4">1689332538</span><span style="color:#2a2a2a">,</span></div>
<div class="t" style="right:807px;top:507.70px;font-family:'Liberation Mono',monospace;font-size:11px;line-height:11px;color:#1a73e8">-</div>
<div class="t" style="left:329.5px;top:520.90px;font-family:'Liberation Mono',monospace;font-size:12px;letter-spacing:-0.6px;line-height:12px;white-space:pre"><span style="color:#2a2a2a">        </span><span style="color:#2a2a2a">&quot;mt&quot;</span><span style="color:#2a2a2a">: </span><span style="color:#2d14d4">1689332538</span></div>
<div class="t" style="right:807px;top:520.90px;font-family:'Liberation Mono',monospace;font-size:11px;line-height:11px;color:#1a73e8">-</div>
<div class="t" style="left:329.5px;top:534.10px;font-family:'Liberation Mono',monospace;font-size:12px;letter-spacing:-0.6px;line-height:12px;white-space:pre"><span style="color:#2a2a2a">    }</span></div>
<div class="t" style="right:807px;top:534.10px;font-family:'Liberation Mono',monospace;font-size:11px;line-height:11px;color:#1a73e8">-</div>
<div class="t" style="left:329.5px;top:547.30px;font-family:'Liberation Mono',monospace;font-size:12px;letter-spacing:-0.6px;line-height:12px;white-space:pre"><span style="color:#2a2a2a">]</span></div>
<div class="t" style="right:807px;top:547.30px;font-family:'Liberation Mono',monospace;font-size:11px;line-height:11px;color:#1a73e8">-</div>
<div class="r" style="left:329px;top:216px;width:7px;height:14px;background:rgba(0,0,0,0.06);border-bottom:1px solid #555"></div>
<div class="r" style="left:329px;top:546px;width:7px;height:14px;background:rgba(0,0,0,0.06);border-bottom:1px solid #555"></div>
<div class="r" style="left:1113px;top:212px;width:15px;height:397px;background:#f1f1f1;"></div>
<div class="r" style="left:1115px;top:227px;width:11px;height:290px;background:#a8a8a8;"></div>
<svg style="left:0;top:0" width="1128" height="636"><path d="M1117 222 H1124 L1120.5 218 Z" fill="#a3a3a3"/><path d="M1117 599 H1124 L1120.5 603 Z" fill="#505050"/></svg>
<div class="r" style="left:0px;top:608px;width:282px;height:1px;background:#cbcdd1;"></div>
<div class="r" style="left:0px;top:609px;width:282px;height:27px;background:#f1f3f4;"></div>
<div class="t" style="left:12.2px;top:616.34px;font-size:12px;line-height:12px;color:#5f6368;font-family:'Liberation Sans',sans-serif;">Запросы: 105</div>
<div class="r" style="left:97.5px;top:615px;width:1px;height:15px;background:#cbcdd1;"></div>
<div class="t" style="left:106.4px;top:616.34px;font-size:12px;line-height:12px;color:#5f6368;font-family:'Liberation Sans',sans-serif;letter-spacing:-0.074px;">Перенесено: 22.2 kB.</div>
<div class="r" style="left:233.5px;top:615px;width:1px;height:15px;background:#cbcdd1;"></div>
<div class="r" style="left:243.2px;top:609px;width:37px;height:27px;overflow:hidden">
<div class="t" style="left:0;top:615.84px;font-size:12px;line-height:12px;color:#5f6368;top:6.34px">Ресурсы: 1.2 MB</div>
</div>
<div class="r" style="left:284px;top:609px;width:844px;height:1px;background:#cbcdd1;"></div>
<div class="r" style="left:284px;top:610px;width:844px;height:26px;background:#dfe1e6;"></div>
<svg style="left:0;top:0" width="1128" height="636"><path d="M297.8 618.4 Q295.6 618.4 295.6 620.2 V621.8 Q295.6 623.5 293.7 623.5 Q295.6 623.5 295.6 625.2 V626.8 Q295.6 628.6 297.8 628.6 M302.2 618.4 Q304.4 618.4 304.4 620.2 V621.8 Q304.4 623.5 306.3 623.5 Q304.4 623.5 304.4 625.2 V626.8 Q304.4 628.6 302.2 628.6" fill="none" stroke="#1a73e8" stroke-width="1.8"/></svg>
<div class="t" style="left:318.7px;top:616.34px;font-size:12px;line-height:12px;color:#5f6368;font-family:'Liberation Sans',sans-serif;letter-spacing:-0.061px;">Строка 1, столбец 1</div>
<div class="r" style="left:0px;top:635px;width:282px;height:1px;background:#c8cbd0;"></div>
<div class="r" style="left:0px;top:0px;width:1px;height:636px;background:#c5c8cd;z-index:50"></div>
<div class="r" style="left:1px;top:28px;width:1px;height:608px;background:#dcdee2;z-index:50"></div>
<div class="r" style="left:0px;top:0px;width:1128px;height:1px;background:#5d6b76;z-index:51"></div>
</body></html>
